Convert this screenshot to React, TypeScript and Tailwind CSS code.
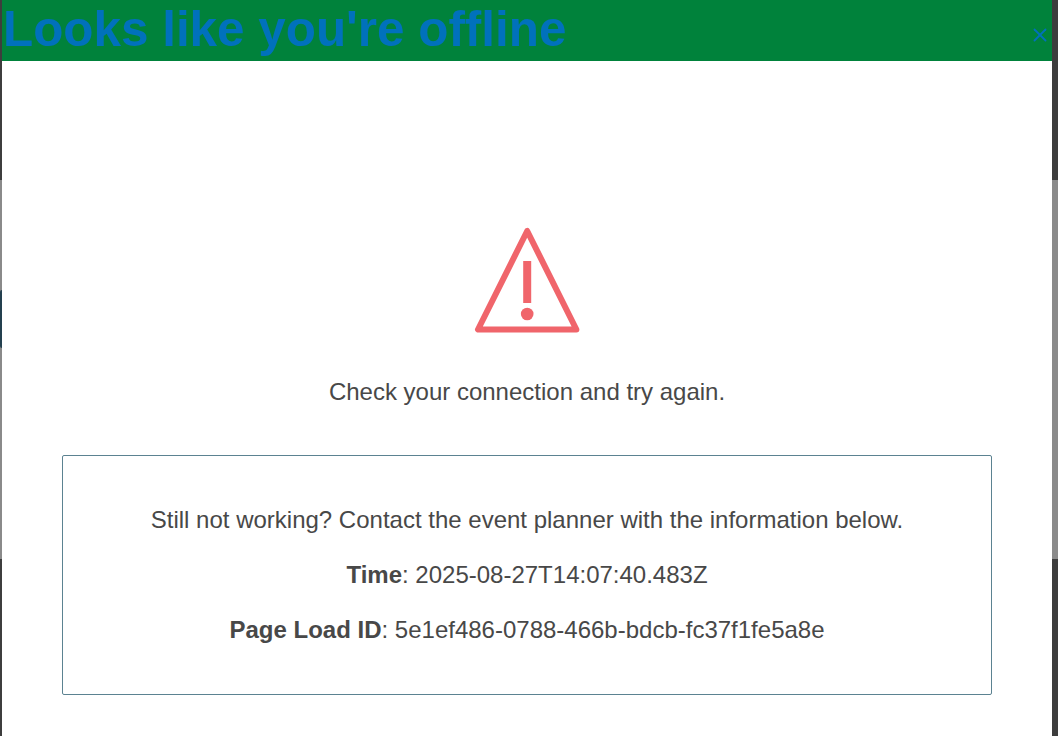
import { X } from "lucide-react"

function WarningIcon() {
  return (
    <svg width="106" height="106" viewBox="0 0 106 106" fill="none" className="block">
      <path d="M53.200 4 L4 102.500 H102.400 Z" stroke="#f0656b" strokeWidth="6" strokeLinejoin="round" />
      <rect x="49.200" y="34" width="8" height="42" fill="#f0656b" />
      <circle cx="53.200" cy="87" r="6.300" fill="#f0656b" />
    </svg>
  )
}

export default function App() {
  return (
    <div className="flex h-[736px] w-[1058px] overflow-hidden font-['Liberation_Sans',Arial,sans-serif]">
      <div className="flex w-[2px] flex-col">
        <div className="h-[180px] bg-[#3d3d3d]" />
        <div className="flex h-[379px] flex-col bg-[#8a8a8a] pt-[110px]">
          <div className="h-[58px] rounded-l-full bg-[#24404f]" />
        </div>
        <div className="flex-1 bg-[#3d3d3d]" />
      </div>

      <div className="flex w-[1050px] flex-col bg-white">
        <div className="flex h-[61px] items-start justify-between bg-[#00823b]">
          <h1 className="pl-px text-[49.4px] leading-[58px] font-bold text-[#0071bc]">Looks like you're offline</h1>
          <X className="mt-[24px] mr-[1px] text-[#0071bc]" size={22} strokeWidth={2} />
        </div>

        <div className="flex flex-1 flex-col items-center text-[24px] text-[#484848]">
          <div className="mt-[166px]">
            <WarningIcon />
          </div>
          <p className="mt-[44px] leading-[30px]">Check your connection and try again.</p>
          <div className="mt-[48px] flex h-[240px] w-[930px] flex-col items-center rounded-[2px] border border-[#5b8291] pt-[49px]">
            <p className="leading-[30px]">Still not working? Contact the event planner with the information below.</p>
            <p className="mt-[25px] leading-[30px]">
              <strong>Time</strong>: 2025-08-27T14:07:40.483Z
            </p>
            <p className="mt-[25px] leading-[30px]">
              <strong>Page Load ID</strong>: 5e1ef486-0788-466b-bdcb-fc37f1fe5a8e
            </p>
          </div>
        </div>
      </div>

      <div className="flex w-[6px] flex-col">
        <div className="h-[180px] bg-[#3d3d3d]" />
        <div className="h-[379px] bg-[#8a8a8a]" />
        <div className="flex-1 bg-[#3d3d3d]" />
      </div>
    </div>
  )
}
